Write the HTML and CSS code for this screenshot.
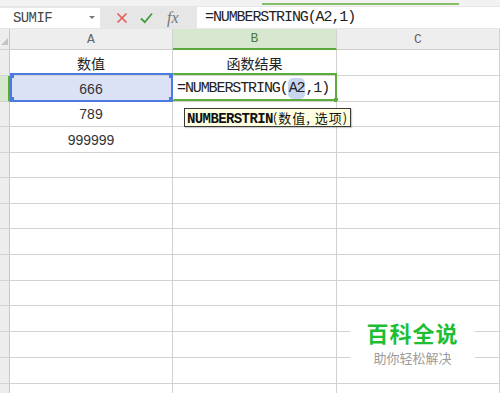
FILE: index.html
```html
<!DOCTYPE html>
<html lang="zh-CN">
<head>
    <meta charset="UTF-8">
    <meta name="viewport" content="width=device-width, initial-scale=1.0">
    <title>NUMBERSTRING</title>
    <link rel="stylesheet" href="styles.css">
</head>
<body>
    <div class="top-strip"><span class="tab-line"></span></div>

    <div class="formula-bar">
        <div class="name-box">
            <span>SUMIF</span>
            <span class="caret"></span>
        </div>
        <div class="fb-icons">
            <svg class="icon-x" width="12" height="12" viewBox="0 0 12 12">
                <path d="M1.5 1.5 L10.5 10.5 M10.5 1.5 L1.5 10.5" stroke="#e25b5b" stroke-width="1.6" fill="none"/>
            </svg>
            <svg class="icon-ok" width="13" height="12" viewBox="0 0 13 12">
                <path d="M1 6.5 L4.8 10.2 L12 1.5" stroke="#3d9f3a" stroke-width="1.8" fill="none"/>
            </svg>
            <span class="fx">fx</span>
        </div>
        <div class="formula-input">=NUMBERSTRING(A2,1)</div>
    </div>

    <div class="sheet">
        <div class="row head">
            <div class="cell corner"><span class="corner-tri"></span></div>
            <div class="cell col-head">A</div>
            <div class="cell col-head active">B</div>
            <div class="cell col-head">C</div>
        </div>
        <div class="row">
            <div class="cell row-head"></div>
            <div class="cell cjk">数值</div>
            <div class="cell cjk">函数结果</div>
            <div class="cell"></div>
        </div>
        <div class="row">
            <div class="cell row-head active"></div>
            <div class="cell num selected">
                666
                <div class="sel-box">
                    <i class="h tl"></i><i class="h tr"></i><i class="h bl"></i><i class="h br"></i>
                </div>
            </div>
            <div class="cell editing">
                <span class="edit-text">=NUMBERSTRING(<span class="ref">A2</span>,1)</span>
                <div class="edit-box"><i class="gh"></i></div>
                <div class="tooltip"><b>NUMBERSTRIN</b><span class="args">(数值, 选项)</span></div>
            </div>
            <div class="cell"></div>
        </div>
        <div class="row short">
            <div class="cell row-head"></div>
            <div class="cell num">789</div>
            <div class="cell"></div>
            <div class="cell"></div>
        </div>
        <div class="row">
            <div class="cell row-head"></div>
            <div class="cell num">999999</div>
            <div class="cell"></div>
            <div class="cell"></div>
        </div>
        <div class="row short"><div class="cell row-head"></div><div class="cell"></div><div class="cell"></div><div class="cell"></div></div>
        <div class="row"><div class="cell row-head"></div><div class="cell"></div><div class="cell"></div><div class="cell"></div></div>
        <div class="row short"><div class="cell row-head"></div><div class="cell"></div><div class="cell"></div><div class="cell"></div></div>
        <div class="row"><div class="cell row-head"></div><div class="cell"></div><div class="cell"></div><div class="cell"></div></div>
        <div class="row"><div class="cell row-head"></div><div class="cell"></div><div class="cell"></div><div class="cell"></div></div>
        <div class="row short"><div class="cell row-head"></div><div class="cell"></div><div class="cell"></div><div class="cell"></div></div>
        <div class="row"><div class="cell row-head"></div><div class="cell"></div><div class="cell"></div><div class="cell"></div></div>
        <div class="row"><div class="cell row-head"></div><div class="cell"></div><div class="cell"></div><div class="cell"></div></div>
        <div class="row"><div class="cell row-head"></div><div class="cell"></div><div class="cell"></div><div class="cell"></div></div>
        <div class="row"><div class="cell row-head"></div><div class="cell"></div><div class="cell"></div><div class="cell"></div></div>

        <div class="watermark">
            <div class="wm-title">百科全说</div>
            <div class="wm-sub">助你轻松解决</div>
        </div>
    </div>
</body>
</html>
```

FILE: styles.css
```css
* {
    box-sizing: border-box;
}
body {
    margin: 0;
    width: 500px;
    height: 393px;
    overflow: hidden;
    background: #fff;
    font-family: "Liberation Sans", Arial, "Noto Sans CJK SC", sans-serif;
    color: #333;
}
.top-strip {
    height: 6px;
    background: #f2f2f2;
    position: relative;
}
.tab-line {
    position: absolute;
    left: 262px;
    top: 3px;
    width: 197px;
    height: 2px;
    background: #86bf69;
}
.formula-bar {
    height: 23px;
    background: #e6e6e6;
    display: flex;
    align-items: center;
}
.name-box {
    width: 100px;
    height: 20px;
    background: #fff;
    display: flex;
    align-items: center;
    justify-content: space-between;
    padding: 0 5px 0 13px;
    font-family: "Liberation Mono", "DejaVu Sans Mono", "Courier New", monospace;
    font-size: 14px;
    letter-spacing: -0.6px;
    color: #444;
}
.caret {
    width: 0;
    height: 0;
    border-left: 3px solid transparent;
    border-right: 3px solid transparent;
    border-top: 3px solid #777;
}
.fb-icons {
    width: 97px;
    display: flex;
    align-items: center;
    padding-left: 16px;
    gap: 12px;
}
.fx {
    font-family: "Liberation Serif", serif;
    font-style: italic;
    font-size: 16px;
    color: #777;
    margin-left: 2px;
}
.formula-input {
    flex: 1;
    height: 21px;
    background: #fff;
    padding-left: 8px;
    font-family: "Liberation Mono", "DejaVu Sans Mono", "Courier New", monospace;
    font-size: 15px;
    letter-spacing: -1.1px;
    line-height: 21px;
    color: #222;
}
.sheet {
    position: relative;
}
.row {
    display: grid;
    grid-template-columns: 10px 163px 164px 163px;
    height: 26px;
}
.row.short {
    height: 25px;
}
.row.head {
    height: 21px;
}
.cell {
    border-right: 1px solid #d2d2d2;
    border-bottom: 1px solid #d2d2d2;
    display: flex;
    align-items: center;
    justify-content: center;
    position: relative;
}
.corner, .row-head {
    background: #ededed;
    border-right-color: #c8c8c8;
}
.corner-tri {
    position: absolute;
    left: 1px;
    bottom: 4px;
    width: 0;
    height: 0;
    border-left: 7px solid transparent;
    border-bottom: 7px solid #c4c4c4;
}
.col-head {
    background: #eeeeee;
    font-family: "Liberation Mono", "DejaVu Sans Mono", "Courier New", monospace;
    font-size: 13px;
    color: #666;
    border-bottom-color: #cfcfcf;
}
.col-head.active {
    background: #d8e8d0;
    border-bottom: 2px solid #5aa83c;
    color: #4a7a3a;
}
.row-head.active {
    background: #d8e8d0;
    border-right: 2px solid #5aa83c;
}
.cjk {
    font-family: "Noto Sans CJK SC", sans-serif;
    font-size: 14px;
    color: #222;
}
.num {
    font-size: 14px;
    color: #333;
}
.selected {
    background: #dbe2f5;
}
.sel-box {
    position: absolute;
    left: 0;
    top: -3px;
    width: 163px;
    height: 29px;
    border: 2px solid #4b7be0;
}
.h {
    position: absolute;
    width: 4px;
    height: 5px;
    background: #4b7be0;
}
.h.tl { left: -2px; top: -2px; }
.h.tr { right: -2px; top: -2px; }
.h.bl { left: -2px; bottom: -2px; }
.h.br { right: -2px; bottom: -2px; }
.editing {
    justify-content: flex-start;
    padding-left: 4px;
}
.edit-text {
    font-family: "Liberation Mono", "DejaVu Sans Mono", "Courier New", monospace;
    font-size: 15px;
    letter-spacing: -1.1px;
    color: #222;
    position: relative;
    z-index: 1;
}
.ref {
    background: #c8d6f0;
    border-radius: 5px;
    padding: 2px 1px;
}
.edit-box {
    position: absolute;
    left: -1px;
    top: -3px;
    width: 165px;
    height: 28px;
    border: 2px solid #5cad3c;
    border-left-color: transparent;
}
.gh {
    position: absolute;
    right: -3px;
    bottom: -3px;
    width: 4px;
    height: 4px;
    background: #5cad3c;
}
.tooltip {
    position: absolute;
    left: 11px;
    top: 32px;
    height: 19px;
    padding: 0 2px;
    background: #ffffe1;
    border: 1px solid #3a3a3a;
    box-shadow: 1px 1px 1px rgba(0, 0, 0, 0.2);
    font-family: "Noto Sans CJK SC", sans-serif;
    font-size: 13px;
    line-height: 17px;
    white-space: nowrap;
    color: #111;
    z-index: 2;
}
.tooltip b {
    font-family: "Liberation Mono", "DejaVu Sans Mono", "Courier New", monospace;
    font-size: 14px;
    letter-spacing: -0.6px;
}
.args {
    letter-spacing: 1px;
}
.watermark {
    position: absolute;
    left: 350px;
    top: 279px;
    width: 125px;
    height: 66px;
    background: #fff;
    display: flex;
    flex-direction: column;
    align-items: center;
    justify-content: center;
    font-family: "Noto Sans CJK SC", sans-serif;
}
.wm-title {
    font-size: 22px;
    font-weight: bold;
    color: #1fbf35;
    line-height: normal;
    letter-spacing: 1px;
}
.wm-sub {
    font-size: 13px;
    color: #9b9b9b;
    line-height: normal;
}
```
